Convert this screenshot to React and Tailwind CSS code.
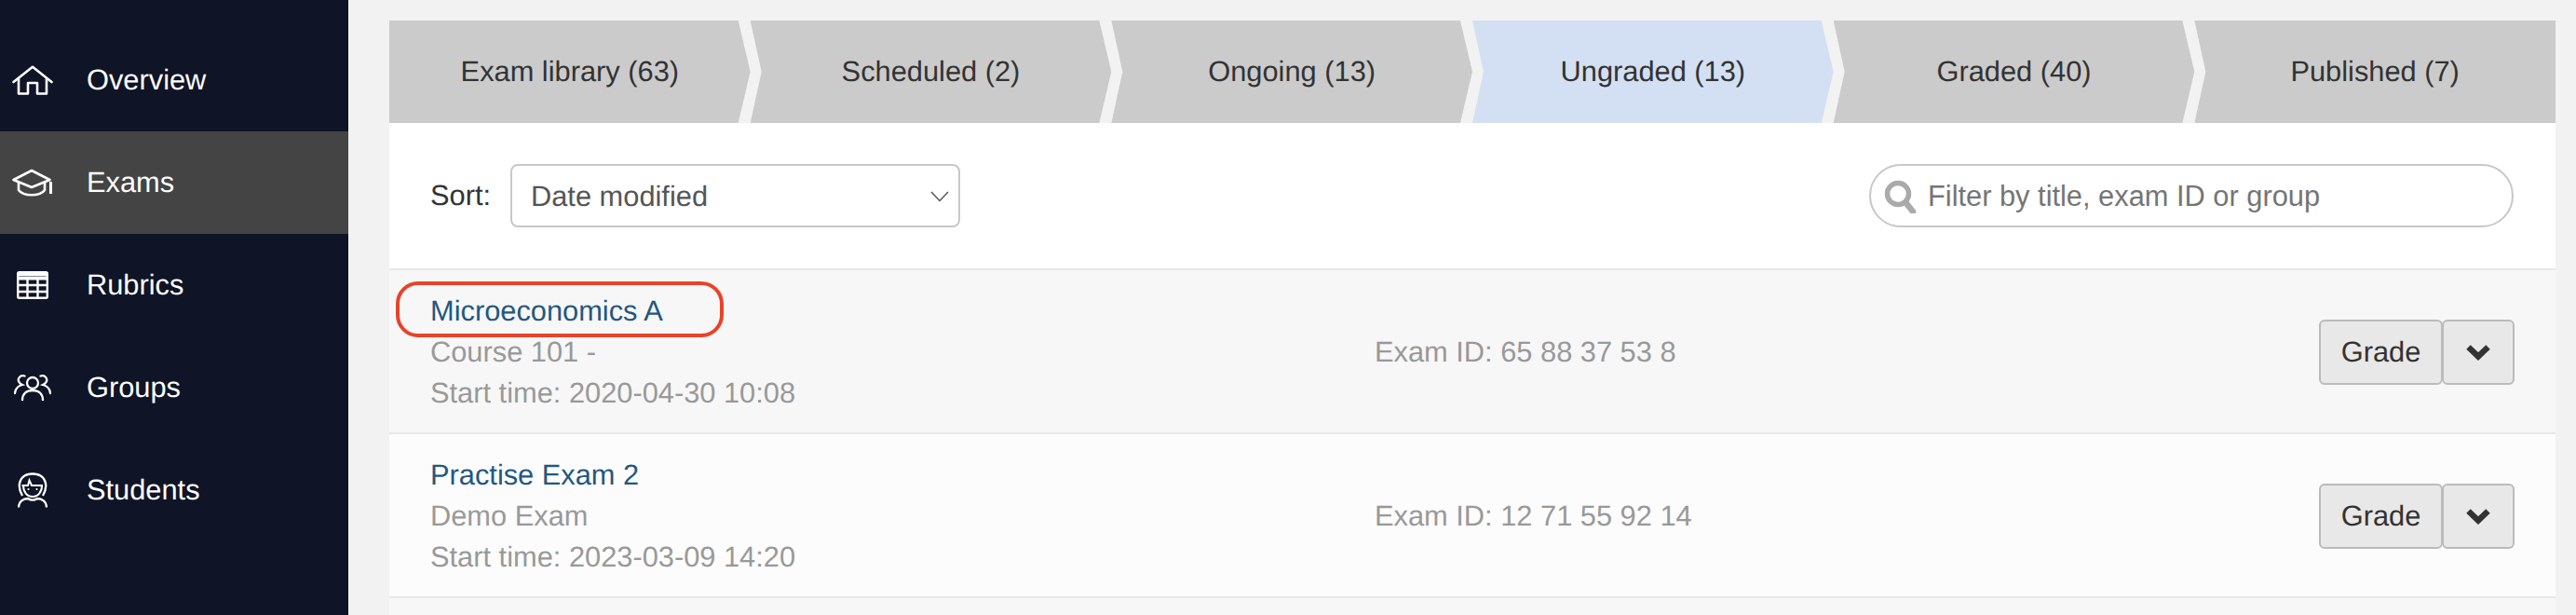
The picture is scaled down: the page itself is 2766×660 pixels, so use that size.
const Home = () => (
  <svg width="44" height="32" viewBox="0 0 44 32" fill="none" stroke="white" strokeWidth="2.6">
    <path d="M1.5 18 L22 1.8 L42.5 18" strokeLinejoin="round" strokeLinecap="round" />
    <path d="M7 14 V30.5 H17 V19 H27 V30.5 H37 V14" strokeLinejoin="round" />
  </svg>
);
const Cap = () => (
  <svg width="44" height="30" viewBox="0 0 44 30" fill="none" stroke="white" strokeWidth="2.6">
    <path d="M1.5 12 L21 2 L40.5 12 L21 20 Z" strokeLinejoin="round" />
    <path d="M7 15 V23 C12 30 30 30 35 23 V15" strokeLinejoin="round" />
    <path d="M41.5 14 V27" strokeWidth="3" />
  </svg>
);
const Table = () => (
  <svg width="34" height="30" viewBox="0 0 34 30" fill="none" stroke="white" strokeWidth="2.4">
    <rect x="1.2" y="1.2" width="31.6" height="27.6" rx="1.5" />
    <path d="M1 3 H33 M1 7.5 H33" strokeWidth="4" />
    <path d="M1 15 H33 M1 22 H33 M11.5 7 V29 M22.5 7 V29" />
  </svg>
);
const People = () => (
  <svg width="40" height="28" viewBox="0 0 40 28" fill="none" stroke="white" strokeWidth="2.3" strokeLinecap="round">
    <circle cx="20" cy="9" r="6" />
    <path d="M9 27.5 C9 20 14 17 20 17 C26 17 31 20 31 27.5" />
    <path d="M11.5 1.5 C6 0 3.5 5 5.5 8 C6.5 10 8 10.5 9 11 C5 12 1.5 15 1 20" />
    <path d="M28.5 1.5 C34 0 36.5 5 34.5 8 C33.5 10 32 10.5 31 11 C35 12 38.5 15 39 20" />
  </svg>
);
const Student = () => (
  <svg width="32" height="38" viewBox="0 0 32 38" fill="none" stroke="white" strokeWidth="2.3">
    <path d="M5 25 C-1 15 1 1.5 16 1.5 C31 1.5 33 15 27 25" />
    <path d="M4.5 14 H11 L12.5 8.5 L15 14 H27" strokeWidth="2" />
    <path d="M6 14 C6 21 10 26 16 26 C22 26 26 21 26 14" strokeWidth="2" />
    <circle cx="11.5" cy="18" r="1.1" fill="white" stroke="none" />
    <circle cx="20.5" cy="18" r="1.1" fill="white" stroke="none" />
    <path d="M1 37.5 C1 31 6 28 11 28 C14 30 18 30 21 28 C26 28 31 31 31 37.5" />
  </svg>
);

const nav = [
  { label: "Overview", Icon: Home },
  { label: "Exams", Icon: Cap, active: true },
  { label: "Rubrics", Icon: Table },
  { label: "Groups", Icon: People },
  { label: "Students", Icon: Student },
];

const tabs = [
  { label: "Exam library (63)", shape: "[clip-path:polygon(0_0,calc(100%-13px)_0,100%_50%,calc(100%-13px)_100%,0_100%)]" },
  { label: "Scheduled (2)", shape: "[clip-path:polygon(0_0,calc(100%-13px)_0,100%_50%,calc(100%-13px)_100%,0_100%,12px_50%)]" },
  { label: "Ongoing (13)", shape: "[clip-path:polygon(0_0,calc(100%-13px)_0,100%_50%,calc(100%-13px)_100%,0_100%,12px_50%)]" },
  { label: "Ungraded (13)", active: true, shape: "[clip-path:polygon(0_0,calc(100%-13px)_0,100%_50%,calc(100%-13px)_100%,0_100%,12px_50%)]" },
  { label: "Graded (40)", shape: "[clip-path:polygon(0_0,calc(100%-13px)_0,100%_50%,calc(100%-13px)_100%,0_100%,12px_50%)]" },
  { label: "Published (7)", shape: "[clip-path:polygon(0_0,100%_0,100%_100%,0_100%,12px_50%)]" },
];

const rows = [
  { title: "Microeconomics A", course: "Course 101 -", start: "Start time: 2020-04-30 10:08", id: "Exam ID: 65 88 37 53 8", bg: "bg-[#f7f7f7]", ring: true },
  { title: "Practise Exam 2", course: "Demo Exam", start: "Start time: 2023-03-09 14:20", id: "Exam ID: 12 71 55 92 14", bg: "bg-[#fcfcfc]" },
];

export default function App() {
  return (
    <div className="flex h-[660px] w-[2766px] overflow-hidden bg-[#f2f2f2] font-['Liberation_Sans',Arial,sans-serif] text-[30.8px] text-[#333] [text-rendering:geometricPrecision]">
      <aside className="w-[374px] shrink-0 bg-[#0f1526] pt-[31px]">
        {nav.map(({ label, Icon, active }) => (
          <div key={label} className={`flex h-[110px] items-center text-white ${active ? "bg-[#444444]" : ""}`}>
            <span className="flex w-[93px] justify-center pr-[23px]"><Icon /></span>
            <span>{label}</span>
          </div>
        ))}
      </aside>
      <main className="ml-[44px] w-[2326px] pt-[22px]">
        <div className="grid h-[110px] grid-cols-6">
          {tabs.map((t) => (
            <div key={t.label} className={`flex items-center justify-center ${t.shape} ${t.active ? "bg-[#d3e0f3]" : "bg-[#cbcbcb]"}`}>
              {t.label}
            </div>
          ))}
        </div>
        <div className="flex h-[156px] items-center justify-between bg-white pl-[44px] pr-[45px]">
          <div className="flex items-center">
            <span className="w-[86px]">Sort:</span>
            <div className="flex h-[68px] w-[483px] items-center justify-between rounded-[8px] border-2 border-[#c8c8c8] pl-[20px] pr-[10px] pt-[2px] text-[#555]">
              <span>Date modified</span>
              <svg width="20" height="12" viewBox="0 0 20 12" fill="none" stroke="#555" strokeWidth="1.5"><path d="M1 1 L10 10.5 L19 1" /></svg>
            </div>
          </div>
          <div className="flex h-[68px] w-[692px] items-center rounded-full border-2 border-[#c8c8c8] pl-[14px] pt-[2px]">
            <svg width="36" height="36" viewBox="0 0 36 36" fill="none" stroke="#aaaaaa" className="mr-[11px] shrink-0">
              <circle cx="15" cy="15" r="11.5" strokeWidth="5.5" />
              <path d="M23 24 L31 34" strokeWidth="6.5" strokeLinecap="round" />
            </svg>
            <input readOnly placeholder="Filter by title, exam ID or group" className="w-full bg-transparent outline-none placeholder:text-[#757575]" />
          </div>
        </div>
        {rows.map((r) => (
          <div key={r.title} className={`relative -mb-[2px] flex h-[178px] items-center border-y-2 border-[#e7e7e7] pl-[44px] pr-[44px] pt-[2px] ${r.bg}`}>
            {r.ring && <div className="absolute left-[7px] top-[12px] h-[60px] w-[352px] rounded-[24px] border-4 border-[#e8432a]" />}
            <div className="w-[1014px] leading-[44px] text-[#999]">
              <div className="text-[#23587f]">{r.title}</div>
              <div>{r.course}</div>
              <div>{r.start}</div>
            </div>
            <div className="text-[#999]">{r.id}</div>
            <div className="ml-auto flex h-[70px]">
              <div className="flex w-[133px] items-center justify-center rounded-[6px] border-2 border-[#bbbbbb] bg-[#e8e8e8]">Grade</div>
              <div className="-ml-[1px] flex w-[78px] items-center justify-center rounded-[6px] border-2 border-[#bbbbbb] bg-[#e8e8e8]">
                <svg width="26" height="20" viewBox="0 0 26 20" fill="none" stroke="#333" strokeWidth="6.5"><path d="M2.5 4.5 L13 14.5 L23.5 4.5" /></svg>
              </div>
            </div>
          </div>
        ))}
        <div className="h-[20px] bg-[#f7f7f7]" />
      </main>
    </div>
  );
}
